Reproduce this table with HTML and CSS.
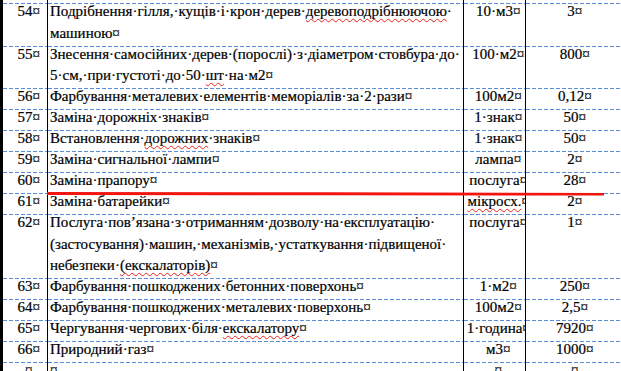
FILE: index.html
```html
<!DOCTYPE html>
<html lang="uk">
<head>
<meta charset="utf-8">
<title>Таблиця послуг</title>
<link rel="stylesheet" href="styles.css">
</head>
<body>
<div class="page">
  <div class="sheet">
    <div class="cell c1 stub"></div><div class="cell c2 stub"></div><div class="cell c3 stub"></div><div class="cell c4 stub"></div>

    <div class="cell c1"><div class="in">54<span class="eoc">¤</span></div></div>
    <div class="cell c2"><div class="in">Подрібнення·гілля,·кущів·і·крон·дерев·<span class="typo">деревоподрібнюючою</span>·<br>машиною<span class="eoc">¤</span></div></div>
    <div class="cell c3"><div class="in">10·м3<span class="eoc">¤</span></div></div>
    <div class="cell c4"><div class="in">3<span class="eoc">¤</span></div></div>

    <div class="cell c1"><div class="in">55<span class="eoc">¤</span></div></div>
    <div class="cell c2"><div class="in">Знесення·самосійних·дерев·(порослі)·з·діаметром·стовбура·до·<br>5·см,·при·густоті·до·50·<span class="typo">шт</span>·на·м2<span class="eoc">¤</span></div></div>
    <div class="cell c3"><div class="in">100·м2<span class="eoc">¤</span></div></div>
    <div class="cell c4"><div class="in">800<span class="eoc">¤</span></div></div>

    <div class="cell c1"><div class="in">56<span class="eoc">¤</span></div></div>
    <div class="cell c2"><div class="in">Фарбування·металевих·елементів·меморіалів·за·2·рази<span class="eoc">¤</span></div></div>
    <div class="cell c3"><div class="in">100м2<span class="eoc">¤</span></div></div>
    <div class="cell c4"><div class="in">0,12<span class="eoc">¤</span></div></div>

    <div class="cell c1"><div class="in">57<span class="eoc">¤</span></div></div>
    <div class="cell c2"><div class="in">Заміна·дорожніх·знаків<span class="eoc">¤</span></div></div>
    <div class="cell c3"><div class="in">1·знак<span class="eoc">¤</span></div></div>
    <div class="cell c4"><div class="in">50<span class="eoc">¤</span></div></div>

    <div class="cell c1"><div class="in">58<span class="eoc">¤</span></div></div>
    <div class="cell c2"><div class="in">Встановлення·<span class="typo">дорожних</span>·знаків<span class="eoc">¤</span></div></div>
    <div class="cell c3"><div class="in">1·знак<span class="eoc">¤</span></div></div>
    <div class="cell c4"><div class="in">50<span class="eoc">¤</span></div></div>

    <div class="cell c1"><div class="in">59<span class="eoc">¤</span></div></div>
    <div class="cell c2"><div class="in">Заміна·сигнальної·лампи<span class="eoc">¤</span></div></div>
    <div class="cell c3"><div class="in">лампа<span class="eoc">¤</span></div></div>
    <div class="cell c4"><div class="in">2<span class="eoc">¤</span></div></div>

    <div class="cell c1"><div class="in">60<span class="eoc">¤</span></div></div>
    <div class="cell c2"><div class="in">Заміна·прапору<span class="eoc">¤</span></div></div>
    <div class="cell c3"><div class="in">послуга<span class="eoc">¤</span></div></div>
    <div class="cell c4"><div class="in">28<span class="eoc">¤</span></div></div>

    <div class="cell c1"><div class="in">61<span class="eoc">¤</span></div></div>
    <div class="cell c2"><div class="in">Заміна·батарейки<span class="eoc">¤</span></div></div>
    <div class="cell c3"><div class="in"><span class="typo">мікросх.</span><span class="eoc">¤</span></div></div>
    <div class="cell c4"><div class="in">2<span class="eoc">¤</span></div></div>

    <div class="cell c1"><div class="in">62<span class="eoc">¤</span></div></div>
    <div class="cell c2"><div class="in">Послуга·пов’язана·з·отриманням·дозволу·на·експлуатацію·<br>(застосування)·машин,·механізмів,·устаткування·підвищеної·<br>небезпеки·<span class="typo">(екскалаторів)</span><span class="eoc">¤</span></div></div>
    <div class="cell c3"><div class="in">послуга<span class="eoc">¤</span></div></div>
    <div class="cell c4"><div class="in">1<span class="eoc">¤</span></div></div>

    <div class="cell c1"><div class="in">63<span class="eoc">¤</span></div></div>
    <div class="cell c2"><div class="in">Фарбування·пошкоджених·бетонних·поверхонь<span class="eoc">¤</span></div></div>
    <div class="cell c3"><div class="in">1·м2<span class="eoc">¤</span></div></div>
    <div class="cell c4"><div class="in">250<span class="eoc">¤</span></div></div>

    <div class="cell c1"><div class="in">64<span class="eoc">¤</span></div></div>
    <div class="cell c2"><div class="in">Фарбування·пошкоджених·металевих·поверхонь<span class="eoc">¤</span></div></div>
    <div class="cell c3"><div class="in">100м2<span class="eoc">¤</span></div></div>
    <div class="cell c4"><div class="in">2,5<span class="eoc">¤</span></div></div>

    <div class="cell c1"><div class="in">65<span class="eoc">¤</span></div></div>
    <div class="cell c2"><div class="in">Чергування·чергових·біля·<span class="typo">екскалатору</span><span class="eoc">¤</span></div></div>
    <div class="cell c3"><div class="in">1·година<span class="eoc">¤</span></div></div>
    <div class="cell c4"><div class="in">7920<span class="eoc">¤</span></div></div>

    <div class="cell c1"><div class="in">66<span class="eoc">¤</span></div></div>
    <div class="cell c2"><div class="in">Природний·газ<span class="eoc">¤</span></div></div>
    <div class="cell c3"><div class="in">м3<span class="eoc">¤</span></div></div>
    <div class="cell c4"><div class="in">1000<span class="eoc">¤</span></div></div>

    <div class="cell c1"><div class="in"><span class="eoc">¤</span></div></div>
    <div class="cell c2"><div class="in"><span class="eoc">¤</span></div></div>
    <div class="cell c3"><div class="in"><span class="eoc">¤</span></div></div>
    <div class="cell c4"><div class="in"><span class="eoc">¤</span></div></div>
  </div>
  <svg class="pen-mark" width="621" height="371" viewBox="0 0 621 371" aria-hidden="true">
    <polygon points="47,192 330,192.3 604,193 604,195.6 330,195.3 47,195" fill="#f2140f"/>
  </svg>
</div>
</body>
</html>
```

FILE: styles.css
```css
html, body {
  margin: 0;
  padding: 0;
  background: #ffffff;
}

body {
  width: 621px;
  height: 371px;
  overflow: hidden;
}

.page {
  position: relative;
  width: 621px;
  height: 371px;
  overflow: hidden;
}

.sheet {
  display: grid;
  grid-template-columns: 45px 416px 62px 114px;
  width: 637px;
  border-left: 3px solid #000;
  font-family: "Liberation Serif", "Times New Roman", serif;
  font-size: 15px;
  line-height: 21.5px;
  color: #000;
  -webkit-text-stroke: 0.2px #000;
}

.cell {
  box-sizing: border-box;
  padding-top: 1px;
  background: linear-gradient(to right, #5a8fd8 4px, transparent 4px) repeat-x 0 0 / 6px 1px;
  overflow: hidden;
  white-space: nowrap;
}

.c1, .c2, .c3 {
  border-right: 1px solid #000;
}

.c1, .c3, .c4 {
  text-align: center;
}

.c2 {
  padding-left: 2px;
}

.c4 {
  padding-right: 24px;
}

.stub {
  height: 3px;
  padding: 0;
  background: none;
}

.in {
  margin-top: -3px;
  margin-bottom: 1.5px;
}

.eoc {
  display: inline-block;
  width: 0;
  white-space: nowrap;
}

.typo {
  text-decoration: underline wavy #e8201a;
  text-decoration-thickness: 1px;
  text-underline-offset: 2px;
  text-decoration-skip-ink: none;
}

.pen-mark {
  position: absolute;
  left: 0;
  top: 0;
}
```
